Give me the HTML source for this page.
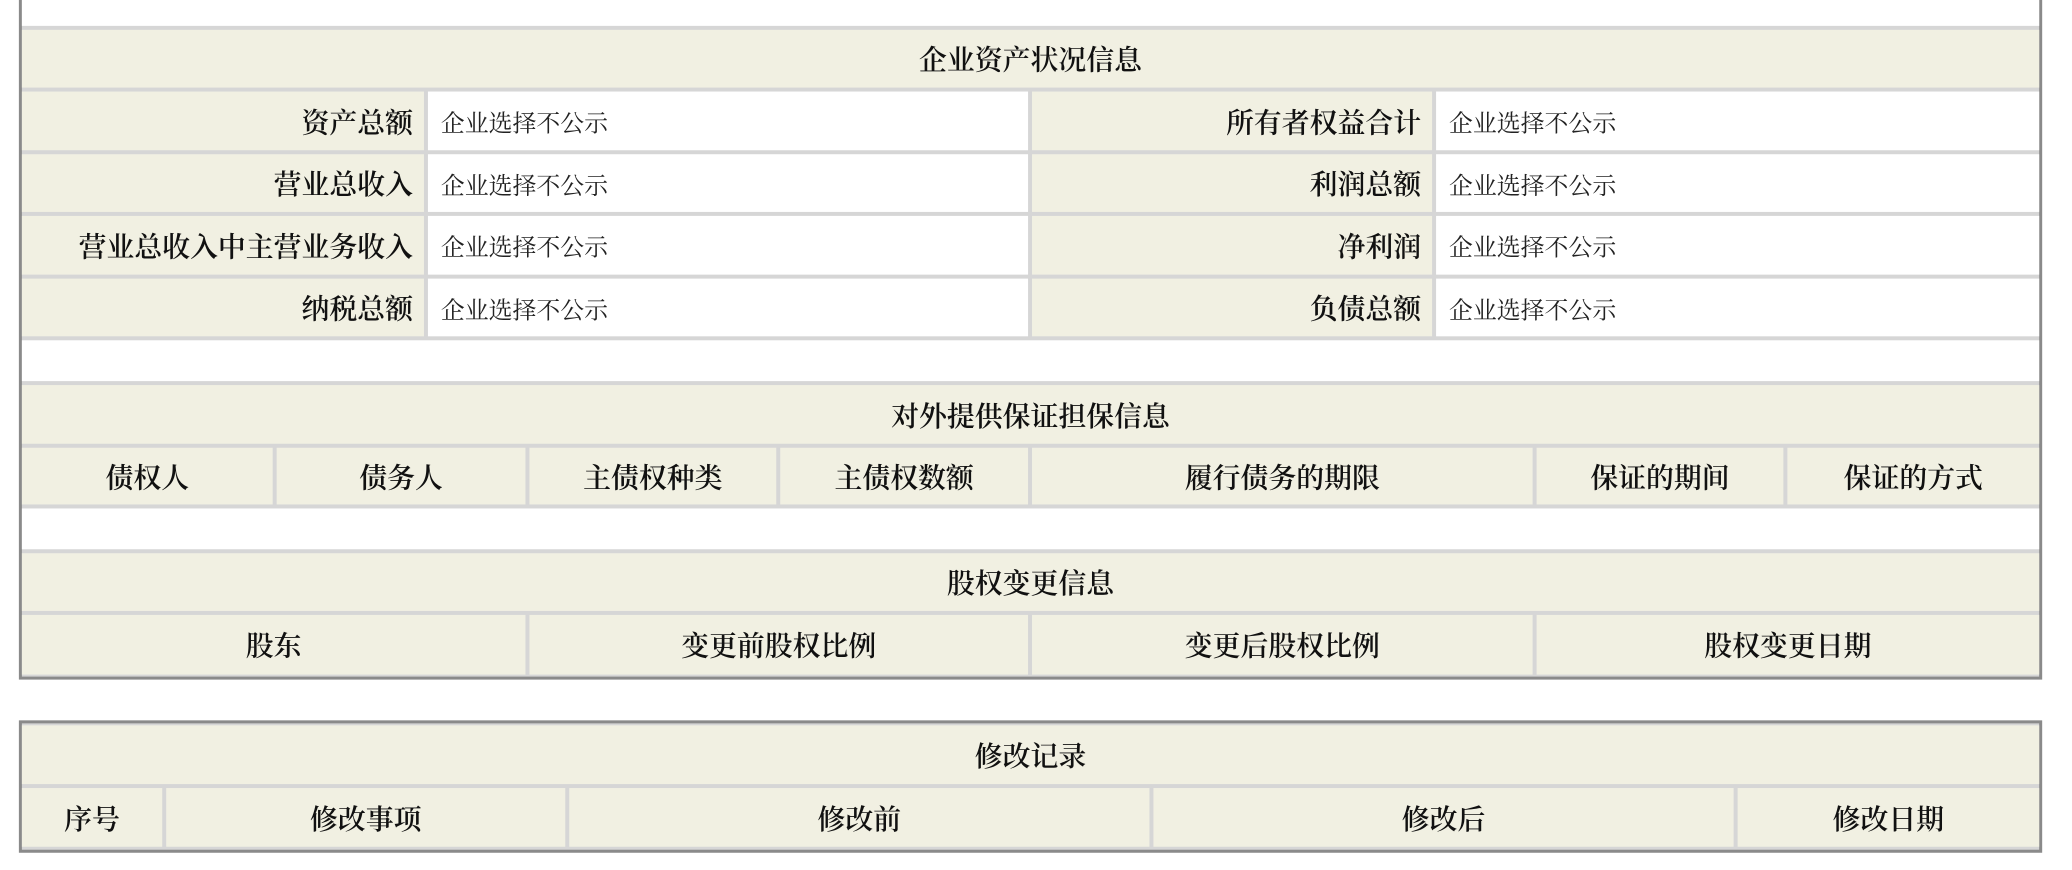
<!DOCTYPE html>
<html><head><meta charset="utf-8"><style>
body{margin:0;width:2072px;height:870px;background:#fff;position:relative;overflow:hidden;font-family:"Liberation Serif","Noto Serif CJK SC",serif;}
#wrap{position:absolute;left:0;top:0;width:2072px;height:870px;transform:scale(0.9952,0.995);transform-origin:0 0;}
.o{position:absolute;border:3px solid #8a8a8a;box-sizing:border-box;background:#d6d6d6;}
.c{position:absolute;background:#f1f0e2;display:flex;align-items:center;justify-content:center;font-weight:600;font-size:28px;color:#111;box-sizing:border-box;white-space:nowrap;}
.w{background:#fff;}
.l{justify-content:flex-end;padding-right:11px;}
.v{background:#fff;justify-content:flex-start;padding-left:13px;font-weight:normal;font-size:24px;color:#222;}
</style></head><body><div id="wrap">
<div class="o" style="left:19px;top:-6px;width:2033px;height:689px"></div>
<div class="c w" style="left:22px;top:0;width:2027px;height:26px"></div>
<div class="c" style="left:22px;top:30px;width:2027px;height:58px">企业资产状况信息</div>

<div class="c l" style="left:22px;top:92px;width:404px;height:59px">资产总额</div>
<div class="c v" style="left:430px;top:92px;width:603px;height:59px">企业选择不公示</div>
<div class="c l" style="left:1037px;top:92px;width:402px;height:59px">所有者权益合计</div>
<div class="c v" style="left:1443px;top:92px;width:606px;height:59px">企业选择不公示</div>

<div class="c l" style="left:22px;top:155px;width:404px;height:58px">营业总收入</div>
<div class="c v" style="left:430px;top:155px;width:603px;height:58px">企业选择不公示</div>
<div class="c l" style="left:1037px;top:155px;width:402px;height:58px">利润总额</div>
<div class="c v" style="left:1443px;top:155px;width:606px;height:58px">企业选择不公示</div>

<div class="c l" style="left:22px;top:217px;width:404px;height:59px">营业总收入中主营业务收入</div>
<div class="c v" style="left:430px;top:217px;width:603px;height:59px">企业选择不公示</div>
<div class="c l" style="left:1037px;top:217px;width:402px;height:59px">净利润</div>
<div class="c v" style="left:1443px;top:217px;width:606px;height:59px">企业选择不公示</div>

<div class="c l" style="left:22px;top:280px;width:404px;height:58px">纳税总额</div>
<div class="c v" style="left:430px;top:280px;width:603px;height:58px">企业选择不公示</div>
<div class="c l" style="left:1037px;top:280px;width:402px;height:58px">负债总额</div>
<div class="c v" style="left:1443px;top:280px;width:606px;height:58px">企业选择不公示</div>

<div class="c w" style="left:22px;top:342px;width:2027px;height:41px"></div>
<div class="c" style="left:22px;top:387px;width:2027px;height:59px">对外提供保证担保信息</div>
<div class="c" style="left:22px;top:450px;width:252px;height:57px">债权人</div>
<div class="c" style="left:278px;top:450px;width:250px;height:57px">债务人</div>
<div class="c" style="left:532px;top:450px;width:248px;height:57px">主债权种类</div>
<div class="c" style="left:784px;top:450px;width:249px;height:57px">主债权数额</div>
<div class="c" style="left:1037px;top:450px;width:503px;height:57px">履行债务的期限</div>
<div class="c" style="left:1544px;top:450px;width:248px;height:57px">保证的期间</div>
<div class="c" style="left:1796px;top:450px;width:253px;height:57px">保证的方式</div>

<div class="c w" style="left:22px;top:511px;width:2027px;height:41px"></div>
<div class="c" style="left:22px;top:556px;width:2027px;height:58px">股权变更信息</div>
<div class="c" style="left:22px;top:618px;width:506px;height:60px">股东</div>
<div class="c" style="left:532px;top:618px;width:501px;height:60px">变更前股权比例</div>
<div class="c" style="left:1037px;top:618px;width:503px;height:60px">变更后股权比例</div>
<div class="c" style="left:1544px;top:618px;width:505px;height:60px">股权变更日期</div>

<div class="o" style="left:19px;top:724px;width:2033px;height:133px"></div>
<div class="c" style="left:22px;top:729px;width:2027px;height:59px">修改记录</div>
<div class="c" style="left:22px;top:792px;width:141px;height:59px">序号</div>
<div class="c" style="left:167px;top:792px;width:401px;height:59px">修改事项</div>
<div class="c" style="left:572px;top:792px;width:583px;height:59px">修改前</div>
<div class="c" style="left:1159px;top:792px;width:583px;height:59px">修改后</div>
<div class="c" style="left:1746px;top:792px;width:303px;height:59px">修改日期</div>
</div></body></html>
